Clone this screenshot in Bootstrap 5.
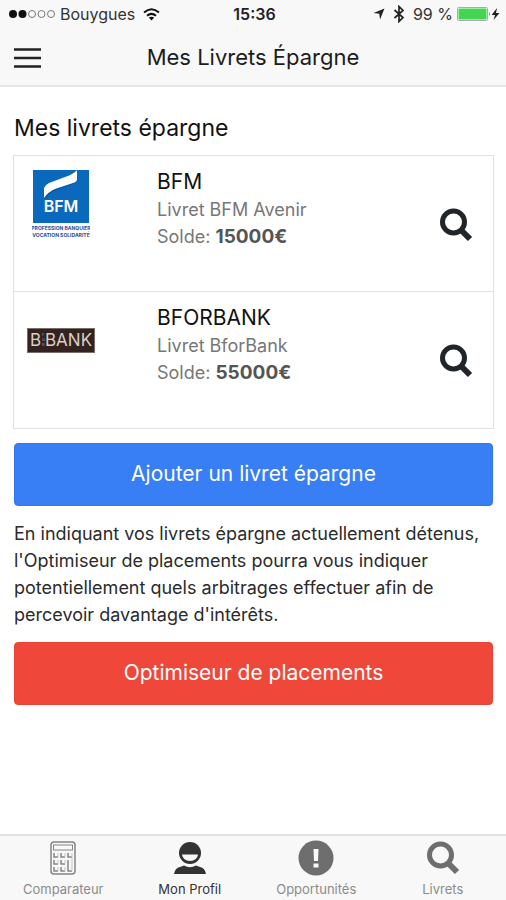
<!DOCTYPE html>
<html lang="fr">
<head>
<meta charset="utf-8">
<meta name="viewport" content="width=device-width, initial-scale=1">
<title>Mes Livrets Épargne</title>
<link href="https://cdn.jsdelivr.net/npm/bootstrap@5.3.0/dist/css/bootstrap.min.css" rel="stylesheet">
<style>
body { font-family: Inter, "Liberation Sans", sans-serif; color: #1c1c1c; background: #fff; }
svg { display: block; flex: none; }
.app-head { background: #f8f8f8; border-bottom: 2px solid #e6e6e6; }
.side { flex: 1 1 0; }
.status { height: 28px; padding: 0 6px 0 9px; font-size: 16px; line-height: 28px; color: #333; }
.status-time { font-size: 16px; color: #222; }
.title-bar { height: 57px; padding: 0 13px; }
.page-title { font-size: 22px; line-height: 28px; }
.page-main { padding: 27px 12px 0 13px; }
.section-title { font-size: 23px; line-height: 28px; margin-bottom: 13px; padding-left: 1px; color: #111; }
.account-list { --bs-list-group-border-color: #e0e0e0; --bs-list-group-border-radius: 0; }
.account { min-height: 137px; padding: 12px 20px 10px 13px; }
.logo-box { width: 68px; height: 68px; margin: 2px 62px 0 0; }
.account-name { font-size: 21px; line-height: 28px; font-weight: 400; margin: 0; color: #111; }
.account-line { font-size: 18px; line-height: 27px; color: #777; }
.account-line strong { font-size: 19px; font-weight: 700; color: #555; }
.btn-main { height: 63px; font-size: 21px; line-height: 28px; border-radius: 4px; color: #fff; margin-left: 1px; padding: 0 12px 2px; width: calc(100% - 2px); }
.btn-add { --bs-btn-bg: #387ef5; --bs-btn-border-color: #3077ef; --bs-btn-hover-bg: #0c60ee; --bs-btn-color: #fff; --bs-btn-hover-color: #fff; margin-top: 14px; }
.btn-optim { --bs-btn-bg: #ef473a; --bs-btn-border-color: #e94335; --bs-btn-hover-bg: #e42112; --bs-btn-color: #fff; --bs-btn-hover-color: #fff; }
.intro { font-size: 18px; line-height: 27px; margin: 14px 0 14px 1px; color: #2b2b2b; }
.tab-bar { background: #f8f8f8; border-top: 2px solid #e2e2e2; height: 66px; }
.tab-item { color: #8b8b8b; font-size: 13px; line-height: 18px; padding-top: 4px; }
.tab-item svg { color: #6e6e6e; margin-bottom: 4px; }
.tab-item.active, .tab-item.active svg { color: #333; }
</style>
<script src="https://cdn.jsdelivr.net/npm/bootstrap@5.3.0/dist/js/bootstrap.bundle.min.js"></script>
</head>
<body class="d-flex flex-column min-vh-100">
<svg width="0" height="0" class="position-absolute" aria-hidden="true">
  <symbol id="search" viewBox="0 0 34 34">
    <circle cx="14.500" cy="14" r="11" fill="none" stroke="currentColor" stroke-width="5"/>
    <path d="M21.500 21.500 31 31" stroke="currentColor" stroke-width="6"/>
  </symbol>
</svg>
<header class="app-head">
  <div class="status d-flex align-items-center">
    <div class="side d-flex align-items-center">
      <svg width="47" height="12" viewBox="0 0 47 12" aria-hidden="true"><g fill="#111"><circle cx="4" cy="6" r="4"/><circle cx="13.500" cy="6" r="4"/></g><g fill="none" stroke="#777"><circle cx="23" cy="6" r="3.500"/><circle cx="32.500" cy="6" r="3.500"/><circle cx="42" cy="6" r="3.500"/></g></svg>
      <span class="ms-1">Bouygues</span>
      <svg class="ms-2" width="17" height="13" viewBox="0 0 17 13" aria-hidden="true"><g fill="none" stroke="#111" stroke-width="2"><path d="M1 4.500Q8.500-2 16 4.500"/><path d="M4 7.800Q8.500 4 13 7.800"/></g><path d="M5.800 9.600Q8.500 7.700 11.200 9.600L8.500 12.500Z" fill="#111"/></svg>
    </div>
    <strong class="status-time fw-semibold">15:36</strong>
    <div class="side d-flex align-items-center justify-content-end">
      <svg width="12" height="12" viewBox="0 0 12 12" aria-hidden="true"><path d="M11.500.5 7 11.500 6.300 5.700.5 5Z" fill="#222"/></svg>
      <svg class="ms-2" width="12" height="18" viewBox="0 0 12 18" aria-hidden="true"><path d="M1.500 5 10 12.500 6 16.500V1.500L10 5.500 1.500 13" fill="none" stroke="#222" stroke-width="1.700"/></svg>
      <span class="ms-2">99 %</span>
      <svg class="ms-1" width="34" height="14" viewBox="0 0 34 14" aria-hidden="true"><rect x=".5" y=".5" width="30" height="13" rx="1" fill="#fff" stroke="#aaa"/><rect x="1.500" y="1.500" width="28" height="11" fill="#43d551"/><path d="M32 5q2 2 0 4z" fill="#888"/></svg>
      <svg width="9" height="12" viewBox="0 0 9 12" aria-hidden="true"><path d="M6 0 .5 7H4L2.500 12 8.500 5H5Z" fill="#222"/></svg>
    </div>
  </div>
  <div class="title-bar d-flex align-items-center">
    <div class="side"><button class="btn border-0 p-0" type="button" aria-label="Menu"><svg width="29" height="20" viewBox="0 0 29 20"><path d="M1 1.500H28M1 10H28M1 18.500H28" stroke="#222" stroke-width="2.400"/></svg></button></div>
    <h1 class="page-title fw-normal m-0">Mes Livrets Épargne</h1>
    <div class="side"></div>
  </div>
</header>
<main class="page-main flex-grow-1">
  <h2 class="section-title fw-normal">Mes livrets épargne</h2>
  <ul class="list-group account-list">
    <li class="list-group-item account d-flex">
      <div class="logo-box d-flex align-items-center justify-content-center">
        <svg width="58" height="68" viewBox="0 0 58 68" role="img" aria-label="BFM">
          <rect x="1" width="56" height="53" fill="#0b69bd"/>
          <path d="M13 29Q12 23 13 19Q14 16 18 14L34 8Q43 5 45 1V10Q45 13 41 14L24 20Q17 23 13 29Z" fill="#053d7d" opacity=".5"/>
          <path d="M12 28V18Q13 15 17 13L33 7Q42 4 45 0V9Q45 12 41 13L23 19Q16 22 12 28Z" fill="#fff"/>
          <g font-family="Inter, sans-serif" text-anchor="middle"><text x="29" y="42" font-size="16" font-weight="600" fill="#fff">BFM</text>
          <g font-weight="700" fill="#294b92"><text x="29" y="60" font-size="5">PROFESSION BANQUIER</text><text x="29" y="67" font-size="5">VOCATION SOLIDARITÉ</text></g></g>
        </svg>
      </div>
      <div class="flex-grow-1">
        <h3 class="account-name">BFM</h3>
        <div class="account-line">Livret BFM Avenir</div>
        <div class="account-line">Solde: <strong>15000€</strong></div>
      </div>
      <button class="btn border-0 p-0 align-self-center" type="button" aria-label="Voir BFM"><svg width="34" height="34"><use href="#search"/></svg></button>
    </li>
    <li class="list-group-item account d-flex">
      <div class="logo-box d-flex align-items-center justify-content-center">
        <svg width="68" height="25" viewBox="0 0 68 25" role="img" aria-label="BforBank">
          <rect x=".5" y=".5" width="67" height="24" fill="#33221e" stroke="#776c67"/>
          <g font-family="Inter, sans-serif" fill="#d8ceca"><text x="3" y="18" font-size="17">B</text><text x="18" y="18" font-size="17">BANK</text></g>
          <g font-family="Inter, sans-serif" font-size="4" fill="#a99e99"><text x="15" y="8">F</text><text x="15" y="13">O</text><text x="15" y="18">R</text></g>
        </svg>
      </div>
      <div class="flex-grow-1">
        <h3 class="account-name">BFORBANK</h3>
        <div class="account-line">Livret BforBank</div>
        <div class="account-line">Solde: <strong>55000€</strong></div>
      </div>
      <button class="btn border-0 p-0 align-self-center" type="button" aria-label="Voir BforBank"><svg width="34" height="34"><use href="#search"/></svg></button>
    </li>
  </ul>
  <button class="btn btn-main btn-add" type="button">Ajouter un livret épargne</button>
  <p class="intro">En indiquant vos livrets épargne actuellement détenus, l'Optimiseur de placements pourra vous indiquer potentiellement quels arbitrages effectuer afin de percevoir davantage d'intérêts.</p>
  <button class="btn btn-main btn-optim" type="button">Optimiseur de placements</button>
</main>
<nav class="tab-bar d-flex sticky-bottom" aria-label="Navigation principale">
  <a class="tab-item side d-flex flex-column align-items-center text-decoration-none" href="#comparateur">
    <svg width="36" height="36" viewBox="0 0 36 36" fill="none" stroke="#858585" aria-hidden="true"><rect x="6" y="2" width="24" height="32" rx="3" stroke-width="1.500"/><rect x="8.500" y="5" width="19" height="5"/><path d="M9 13v4h4M16 13v4h4M23 13v4h4M9 20v4h4M16 20v4h4M23 20v11h4M9 27v4h4M16 27v4h4" stroke-width="1.500"/><path d="M13 13v4M20 13v4M27 13v18M13 20v4M20 20v4M13 27v4M20 27v4" stroke="#c5c5c5"/></svg>Comparateur</a>
  <a class="tab-item active side d-flex flex-column align-items-center text-decoration-none" href="#profil" aria-current="page">
    <svg width="36" height="36" viewBox="0 0 36 36" aria-hidden="true"><circle cx="18" cy="13" r="11" fill="currentColor"/><path d="M10 14.500H26Q25 21 18 21T10 14.500Z" fill="#f8f8f8"/><path d="M2 34Q3 28 8 27L12 25.500Q18 29 24 25.500L28 27Q33 28 34 34Z" fill="currentColor"/></svg>Mon Profil</a>
  <a class="tab-item side d-flex flex-column align-items-center text-decoration-none" href="#opportunites">
    <svg width="36" height="36" viewBox="0 0 36 36" aria-hidden="true"><circle cx="18" cy="18" r="17.500" fill="currentColor"/><path d="M15.500 9H20.500L20 21H16ZM15.500 23.500H20.500V27.500H15.500Z" fill="#f8f8f8"/></svg>Opportunités</a>
  <a class="tab-item side d-flex flex-column align-items-center text-decoration-none" href="#livrets">
    <svg width="36" height="36" viewBox="-1 -1 36 36" aria-hidden="true"><use href="#search" width="34" height="34"/></svg>Livrets</a>
</nav>
</body>
</html>
